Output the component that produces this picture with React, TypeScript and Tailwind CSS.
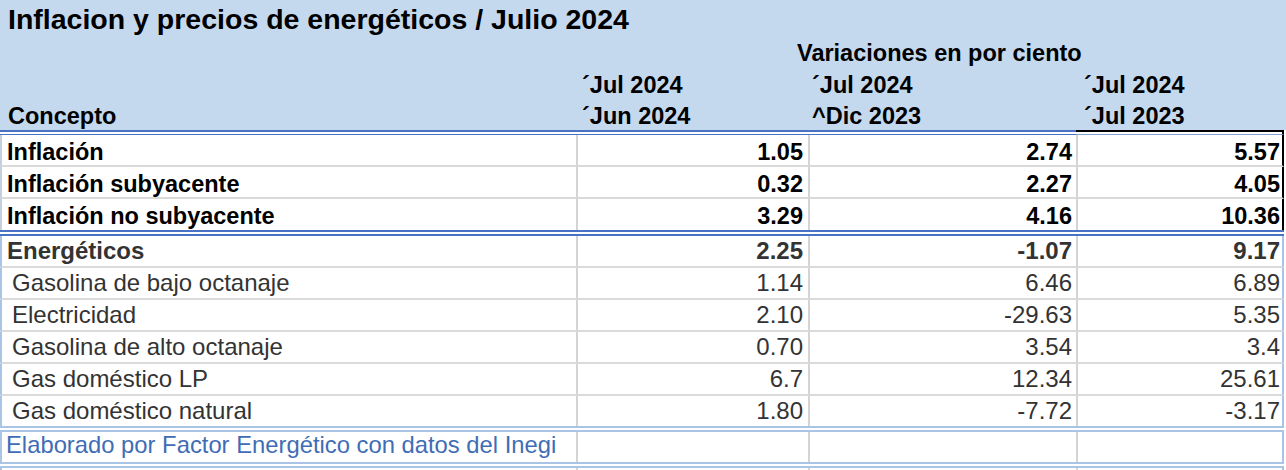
import React from 'react';

interface Fila {
  concepto: string;
  mensual: string;
  anual: string;
  interanual: string;
  bold?: boolean;
  indent?: boolean;
}

const INFLACION: Fila[] = [
  { concepto: 'Inflación', mensual: '1.05', anual: '2.74', interanual: '5.57' },
  { concepto: 'Inflación subyacente', mensual: '0.32', anual: '2.27', interanual: '4.05' },
  { concepto: 'Inflación no subyacente', mensual: '3.29', anual: '4.16', interanual: '10.36' },
];

const ENERGETICOS: Fila[] = [
  { concepto: 'Energéticos', mensual: '2.25', anual: '-1.07', interanual: '9.17', bold: true },
  { concepto: 'Gasolina de bajo octanaje', mensual: '1.14', anual: '6.46', interanual: '6.89', indent: true },
  { concepto: 'Electricidad', mensual: '2.10', anual: '-29.63', interanual: '5.35', indent: true },
  { concepto: 'Gasolina de alto octanaje', mensual: '0.70', anual: '3.54', interanual: '3.4', indent: true },
  { concepto: 'Gas doméstico LP', mensual: '6.7', anual: '12.34', interanual: '25.61', indent: true },
  { concepto: 'Gas doméstico natural', mensual: '1.80', anual: '-7.72', interanual: '-3.17', indent: true },
];

const GRID = 'grid grid-cols-[576px_232px_268px_208px] w-[1284px]';

function HeaderTabla() {
  return (
    <div className="bg-[#c5d9ee] h-[130px] font-bold text-black text-[23.5px]">
      <div className="h-[38px] leading-[38px] text-[28.5px] pl-2">
        Inflacion y precios de energéticos / Julio 2024
      </div>
      <div className={`${GRID} h-[30px] leading-[30px]`}>
        <div />
        <div className="col-span-3 pl-[221px]">Variaciones en por ciento</div>
      </div>
      <div className={`${GRID} h-[32px] pt-[2px] leading-[30px]`}>
        <div />
        <div className="pl-[6px]">´Jul 2024</div>
        <div className="pl-[4px]">´Jul 2024</div>
        <div className="pl-[8px]">´Jul 2024</div>
      </div>
      <div className={`${GRID} h-[30px] pt-[1px] leading-[30px]`}>
        <div className="pl-2">Concepto</div>
        <div className="pl-[6px]">´Jun 2024</div>
        <div className="pl-[4px]">^Dic 2023</div>
        <div className="pl-[8px]">´Jul 2023</div>
      </div>
    </div>
  );
}

function FilaInflacion({ fila, last }: { fila: Fila; last: boolean }) {
  const linea = last ? 'h-[31px]' : 'h-[32px] border-b-2 border-b-[#dadada]';
  return (
    <div className={`${GRID} font-bold text-black text-[23.5px] leading-[30px]`}>
      <div className={`${linea} border-l-2 border-l-[#c4d0de] pl-[5px] pt-[2px]`}>{fila.concepto}</div>
      <div className={`${linea} border-l-2 border-l-[#d4d4d4] text-right pr-[5px] pt-[2px]`}>{fila.mensual}</div>
      <div className={`${linea} border-l-2 border-l-[#d4d4d4] text-right pr-[4px] pt-[2px]`}>{fila.anual}</div>
      <div className={`${linea} border-l-2 border-l-[#d4d4d4] border-r-2 border-r-black text-right pr-[2px] pt-[2px]`}>
        {fila.interanual}
      </div>
    </div>
  );
}

function FilaEnergetico({ fila, last }: { fila: Fila; last: boolean }) {
  const linea = last ? 'h-[30px]' : 'h-[32px] border-b-2 border-b-[#dadada]';
  return (
    <div className={`${GRID} text-[#333] text-[24px] leading-[30px] ${fila.bold ? 'font-bold' : ''}`}>
      <div className={`${linea} border-l-2 border-l-[#a9c4e4] ${fila.indent ? 'pl-[10px]' : 'pl-[5px]'}`}>
        {fila.concepto}
      </div>
      <div className={`${linea} border-l-2 border-l-[#d4d4d4] text-right pr-[5px]`}>{fila.mensual}</div>
      <div className={`${linea} border-l-2 border-l-[#d4d4d4] text-right pr-[4px]`}>{fila.anual}</div>
      <div className={`${linea} border-l-2 border-l-[#d4d4d4] border-r-2 border-r-[#a9c4e4] text-right pr-[2px]`}>
        {fila.interanual}
      </div>
    </div>
  );
}

// Doble línea separadora entre bloques
function DobleLinea({ color }: { color: string }) {
  return <div className={`w-[1284px] h-[6px] border-t-2 border-b-2 ${color}`} />;
}

export default function App() {
  return (
    <div className="w-[1286px] h-[470px] overflow-hidden bg-white font-['Liberation_Sans',Arial,sans-serif]">
      <HeaderTabla />

      {/* borde inferior del encabezado; la última columna va enmarcada en negro */}
      <div className="flex h-[5px]">
        <div className="w-[1076px] border-t-2 border-b border-[#4a72c4]" />
        <div className="w-[208px] border-t-2 border-t-black border-b border-b-[#7f9fd6] border-r-2 border-r-black" />
      </div>

      {INFLACION.map((f, i) => (
        <FilaInflacion key={f.concepto} fila={f} last={i === INFLACION.length - 1} />
      ))}

      <DobleLinea color="border-[#4a72c4]" />

      {ENERGETICOS.map((f, i) => (
        <FilaEnergetico key={f.concepto} fila={f} last={i === ENERGETICOS.length - 1} />
      ))}

      <DobleLinea color="border-[#a9c4e4]" />

      <div className={`${GRID} text-[23.8px] leading-[26px]`}>
        <div className="h-[30px] border-l-2 border-l-[#a9c4e4] pl-[4px] text-[#3f6db5]">
          Elaborado por Factor Energético con datos del Inegi
        </div>
        <div className="h-[30px] border-l-2 border-l-[#d4d4d4]" />
        <div className="h-[30px] border-l-2 border-l-[#d4d4d4]" />
        <div className="h-[30px] border-l-2 border-l-[#d4d4d4] border-r-2 border-r-[#a9c4e4]" />
      </div>

      <DobleLinea color="border-[#a9c4e4]" />

      <div className={`${GRID} h-[10px]`}>
        <div className="border-l-2 border-l-[#a9c4e4]" />
        <div className="border-l-2 border-l-[#d4d4d4]" />
        <div className="border-l-2 border-l-[#d4d4d4]" />
        <div className="border-l-2 border-l-[#d4d4d4] border-r-2 border-r-[#a9c4e4]" />
      </div>
    </div>
  );
}
